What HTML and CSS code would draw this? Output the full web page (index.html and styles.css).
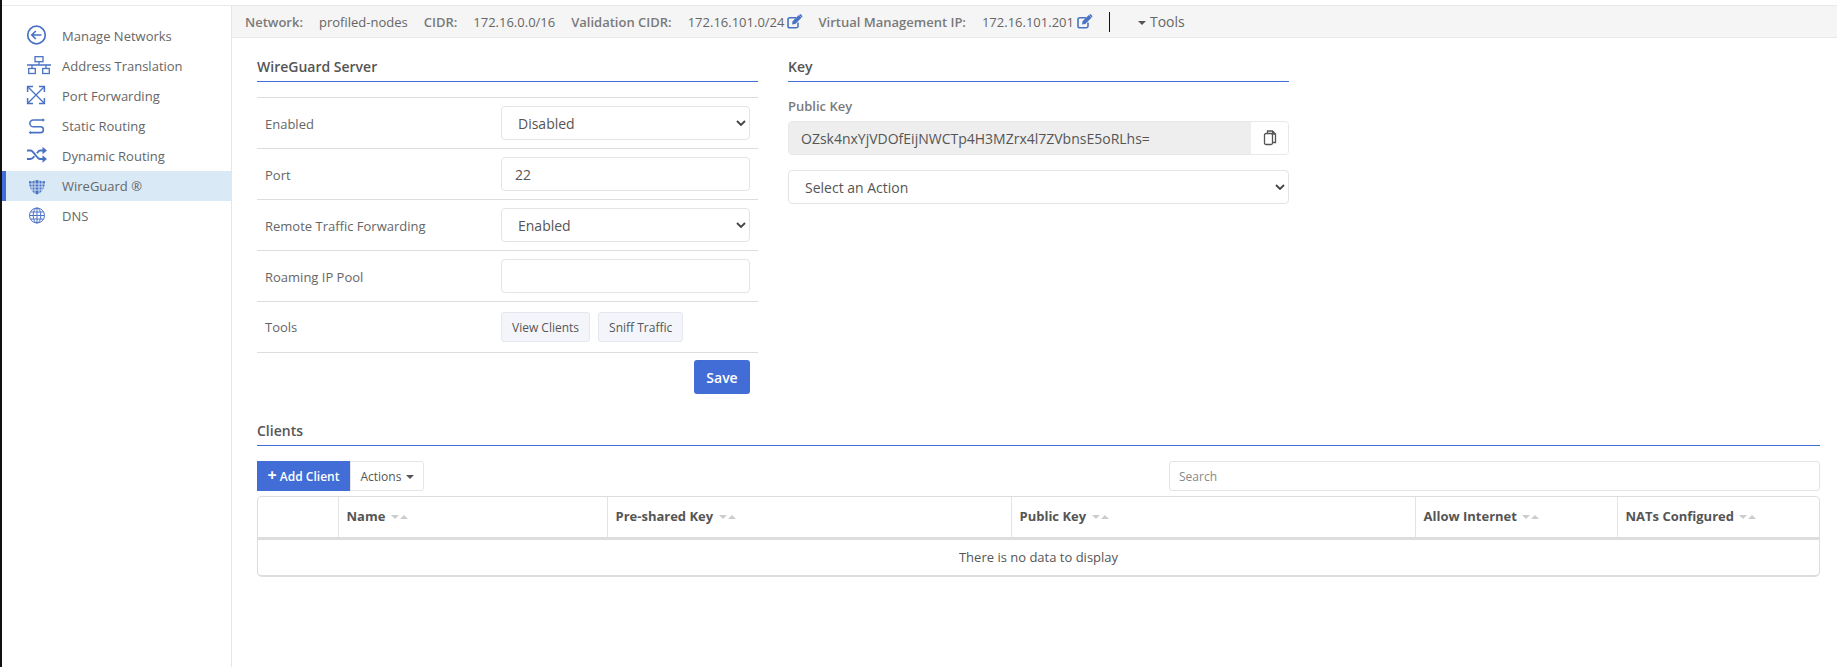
FILE: index.html
```html
<!DOCTYPE html>
<html lang="en">
<head>
  <meta charset="UTF-8" />
  <meta name="viewport" content="width=device-width, initial-scale=1.0" />
  <title>WireGuard</title>
  <link rel="stylesheet" href="styles.css">
</head>
<body>
  <div class="shell">
    <nav class="side">
      <a class="nav-item">
        <svg class="nav-icon" viewBox="0 0 24 20"><circle cx="11.500" cy="9" r="8.800" stroke-width="1.700" /><path d="M16.500 9H7M10.800 5 6.800 9l4 4" stroke-width="1.700" /></svg>
        Manage Networks
      </a>
      <a class="nav-item">
        <svg class="nav-icon" viewBox="0 0 24 20"><rect x="10" y=".7" width="8" height="5" /><rect x="3.700" y="12.500" width="6.600" height="5" /><rect x="17.700" y="12.500" width="6.600" height="5" /><path d="M14 5.700v3.300M2 9h24M7 9v3.500M21 9v3.500" /></svg>
        Address Translation
      </a>
      <a class="nav-item">
        <svg class="nav-icon" viewBox="0 0 24 20"><path d="M3 1l16 16M19 1 3 17" /><path d="M2.600 6V.6h5.400M14 .6h5.400V6M19.400 12v5.400H14M8 17.400H2.600V12" stroke-width="1.500" /></svg>
        Port Forwarding
      </a>
      <a class="nav-item">
        <svg class="nav-icon" viewBox="0 0 24 20"><path d="M18 4H8.300a3.400 3.400 0 0 0 0 6.800h7.200a2.900 2.900 0 0 1 0 5.800H5.500" stroke-width="1.600" /><path class="solid" d="M17.500 2.300 20 4l-2.500 1.700zM6 14.900 3.500 16.600 6 18.300z" /></svg>
        Static Routing
      </a>
      <a class="nav-item">
        <svg class="nav-icon" viewBox="0 0 24 20"><path d="M2 4.500h3.500c3.500 0 6 8.500 9.500 8.500h3M2 13h3.500c1.500 0 2.800-1.200 3.800-2.700M12 7.200c1-1.500 1.800-2.700 3-2.700h3" stroke-width="2" /><path class="solid" d="M17.500.7 22 4.500l-4.500 3.800zM17.500 9.200 22 13l-4.500 3.800z" /></svg>
        Dynamic Routing
      </a>
      <a class="nav-item active">
        <svg class="nav-icon" viewBox="0 0 24 20"><path class="solid" d="M4 5c3 .5 5.500 0 8-1 2.500 1 5 1.500 8 1 0 6-2 11-8 13.500C6 16 4 11 4 5z" /><path class="mesh" d="M3 8h18M3 11h18M3 14h18M7 3v16M10 3v16M14 3v16M17 3v16" /></svg>
        WireGuard ®
      </a>
      <a class="nav-item">
        <svg class="nav-icon thin" viewBox="0 0 24 20"><circle cx="12" cy="9.500" r="7.500" /><ellipse cx="12" cy="9.500" rx="3.800" ry="7.500" /><path d="M12 2v15M4.500 9.500h15M5.500 6h13M5.500 13h13" /></svg>
        DNS
      </a>
    </nav>

    <div class="content">
      <header class="topbar">
        <span class="tb-label">Network:</span><span class="tb-value">profiled-nodes</span>
        <span class="tb-label">CIDR:</span><span class="tb-value">172.16.0.0/16</span>
        <span class="tb-label">Validation CIDR:</span><span class="tb-value">172.16.101.0/24</span>
        <svg class="edit-icon" viewBox="0 0 16 15"><path class="edit-box" d="M11 8.500V12a1.800 1.800 0 0 1-1.800 1.800H2.800A1.800 1.800 0 0 1 1 12V5.500a1.800 1.800 0 0 1 1.800-1.800H9" /><path class="solid" d="M5.500 7.200 11.800 1l2.700 2.700-6.200 6.300-3.200.4zM12.700.4l.8-.3 1.900 1.900-.2.900-.5.500-2.600-2.600z" /></svg>
        <span class="tb-label vm">Virtual Management IP:</span><span class="tb-value">172.16.101.201</span>
        <svg class="edit-icon" viewBox="0 0 16 15"><path class="edit-box" d="M11 8.500V12a1.800 1.800 0 0 1-1.800 1.800H2.800A1.800 1.800 0 0 1 1 12V5.500a1.800 1.800 0 0 1 1.800-1.800H9" /><path class="solid" d="M5.500 7.200 11.800 1l2.700 2.700-6.200 6.300-3.200.4zM12.700.4l.8-.3 1.900 1.900-.2.900-.5.500-2.600-2.600z" /></svg>
        <span class="tb-sep"></span>
        <span class="tb-tools"><i class="caret"></i>Tools</span>
      </header>

      <main class="main">
        <div class="columns">
          <section class="server">
            <h2 class="section-title">WireGuard Server</h2>
            <div class="form-rows">
              <div class="form-row">
                <label>Enabled</label>
                <select class="field"><option>Disabled</option><option>Enabled</option></select>
              </div>
              <div class="form-row">
                <label>Port</label>
                <input class="field" type="text" value="22" />
              </div>
              <div class="form-row">
                <label>Remote Traffic Forwarding</label>
                <select class="field"><option>Enabled</option><option>Disabled</option></select>
              </div>
              <div class="form-row">
                <label>Roaming IP Pool</label>
                <input class="field" type="text" />
              </div>
              <div class="form-row">
                <label class="tools-label">Tools</label>
                <div class="tool-btns">
                  <button class="btn-light">View Clients</button>
                  <button class="btn-light">Sniff Traffic</button>
                </div>
              </div>
            </div>
            <div class="save-row"><button class="btn-save">Save</button></div>
          </section>

          <section class="key">
            <h2 class="section-title">Key</h2>
            <div class="key-label">Public Key</div>
            <div class="key-group">
              <input class="key-input" type="text" readonly value="OZsk4nxYjVDOfEijNWCTp4H3MZrx4l7ZVbnsE5oRLhs=" />
              <button class="key-copy">
                <svg viewBox="0 0 14 16" width="14" height="16"><path d="M4.500 3V1h5l3 3v8.500H9.500M9.500 1v3h3" /><rect x="1.500" y="3.500" width="8" height="11" rx="1.500" /></svg>
              </button>
            </div>
            <select class="field action"><option>Select an Action</option></select>
          </section>
        </div>

        <section class="clients">
          <h2 class="section-title">Clients</h2>
          <div class="toolbar">
            <button class="btn-add"><span class="plus">+</span> Add Client</button>
            <button class="btn-actions">Actions <i class="caret"></i></button>
            <input class="search" type="text" placeholder="Search" />
          </div>
          <div class="table-wrap">
            <table class="clients-table">
              <colgroup>
                <col class="c-check" /><col class="c-name" /><col class="c-key" /><col class="c-key" /><col class="c-flag" /><col />
              </colgroup>
              <thead>
                <tr>
                  <th></th>
                  <th>Name <i class="sort"></i></th>
                  <th>Pre-shared Key <i class="sort"></i></th>
                  <th>Public Key <i class="sort"></i></th>
                  <th>Allow Internet <i class="sort"></i></th>
                  <th>NATs Configured <i class="sort"></i></th>
                </tr>
              </thead>
              <tbody>
                <tr><td colspan="6">There is no data to display</td></tr>
              </tbody>
            </table>
          </div>
        </section>
      </main>
    </div>
  </div>
</body>
</html>
```

FILE: styles.css
```css
* {
  box-sizing: border-box;
}
html, body {
  height: 100%;
  margin: 0;
  overflow: hidden;
}
body {
  background: #fff;
  border-left: 2px solid #111;
  color: #555;
  font-family: 'Open Sans', sans-serif;
  font-size: 13px;
  padding-top: 5px;
}
.shell {
  display: flex;
  height: 100%;
  border-top: 1px solid #e9e9e9;
}

/* sidebar */
.side {
  width: 230px;
  flex: none;
  border-right: 1px solid #e6e6e6;
  padding-top: 15px;
}
.nav-item {
  display: flex;
  align-items: center;
  height: 30px;
  padding-left: 19px;
  color: #666;
  border-left: 4px solid transparent;
}
.nav-item.active {
  background: #d9e9f5;
  border-left-color: #426dd6;
}
.nav-icon {
  width: 24px;
  height: 20px;
  margin-right: 13px;
  flex: none;
  fill: none;
  overflow: visible;
  stroke: #4a72c4;
  stroke-width: 1.300;
}
.nav-icon.thin {
  stroke-width: 1;
}
.nav-icon .mesh {
  stroke: #d9e9f5;
  stroke-width: .9;
}
.nav-icon .solid,
.edit-icon .solid {
  fill: #4a72c4;
  stroke: none;
}

/* top bar */
.content {
  flex: 1;
  min-width: 0;
}
.topbar {
  display: flex;
  align-items: center;
  height: 32px;
  padding-left: 13px;
  background: #f5f5f5;
  border-bottom: 1px solid #e9e9e9;
  color: #666;
}
.tb-label {
  font-weight: 600;
  color: #7a7a7a;
  margin-right: 16px;
}
.tb-label.vm {
  margin-left: 15px;
}
.tb-value {
  margin-right: 16px;
}
.tb-value:has(+ .edit-icon) {
  margin-right: 3px;
}
.edit-icon {
  width: 16px;
  height: 15px;
  flex: none;
}
.edit-box {
  fill: none;
  stroke: #4a72c4;
  stroke-width: 1.600;
}
.tb-sep {
  width: 1px;
  height: 20px;
  background: #111;
  margin-left: 16px;
}
.tb-tools {
  margin-left: 28px;
  font-size: 14px;
}
.caret {
  display: inline-block;
  border-top: 4px solid #555;
  border-left: 4px solid transparent;
  border-right: 4px solid transparent;
  vertical-align: middle;
  margin-right: 4px;
}

/* main area */
.main {
  padding: 14px 17px 0 25px;
}
.columns {
  display: flex;
  gap: 30px;
}
.server, .key {
  width: 501px;
}
.section-title {
  margin: 0;
  height: 30px;
  padding-top: 5px;
  font-size: 14px;
  font-weight: 600;
  line-height: 19px;
  border-bottom: 1px solid #426dd6;
  color: #555;
}
.form-rows {
  margin-top: 15px;
  border-top: 1px solid #ddd;
}
.form-row {
  display: flex;
  align-items: center;
  justify-content: space-between;
  height: 51px;
  padding: 0 8px;
  border-bottom: 1px solid #ddd;
  color: #666;
}
.form-row label {
  flex: none;
  padding-top: 1px;
}
.form-row .tools-label {
  padding-top: 0;
}
.field {
  width: 249px;
  height: 34px;
  padding: 0 16px;
  background-color: #fff;
  border: 1px solid #e4e4e4;
  border-radius: 4px;
  color: #555;
  font-family: inherit;
  font-size: 14px;
  outline: none;
}
select.field {
  appearance: none;
  background-image: url("data:image/svg+xml,%3Csvg xmlns='http://www.w3.org/2000/svg' width='10' height='6'%3E%3Cpath d='M1 1l4 4 4-4' fill='none' stroke='%23444' stroke-width='1.800'/%3E%3C/svg%3E");
  background-repeat: no-repeat;
  background-position: right 3px center;
}
input.field {
  padding: 0 13px;
}
.tool-btns {
  display: flex;
  gap: 8px;
  width: 249px;
}
.btn-light {
  height: 30px;
  padding: 0 10px;
  background: #f4f5fa;
  border: 1px solid #e6e6ee;
  border-radius: 3px;
  color: #555;
  font-family: inherit;
  font-size: 12px;
}
.save-row {
  display: flex;
  justify-content: flex-end;
  padding: 7px 8px 0 0;
}
.btn-save {
  width: 56px;
  height: 34px;
  background: #426dd6;
  border: none;
  border-radius: 3px;
  color: #fff;
  font-family: inherit;
  font-size: 14px;
  font-weight: 600;
}

/* key panel */
.key-label {
  margin-top: 15px;
  height: 24px;
  font-weight: 600;
  color: #7a7a7a;
}
.key-group {
  display: flex;
  height: 34px;
  border: 1px solid #e8e8e8;
  border-radius: 4px;
  overflow: hidden;
}
.key-input {
  flex: 1;
  min-width: 0;
  padding: 0 12px;
  border: none;
  background: #eee;
  color: #555;
  font-family: inherit;
  font-size: 14px;
  outline: none;
}
.key-copy {
  width: 37px;
  padding: 0;
  border: none;
  background: #fff;
  display: flex;
  align-items: center;
  justify-content: center;
}
.key-copy svg {
  fill: none;
  stroke: #555;
  stroke-width: 1.300;
}
.field.action {
  display: block;
  width: 100%;
  margin-top: 15px;
}

/* clients */
.clients {
  margin-top: 22px;
}
.toolbar {
  display: flex;
  align-items: stretch;
  height: 30px;
  margin-top: 15px;
}
.btn-add {
  width: 93px;
  padding: 0;
  background: #426dd6;
  border: none;
  color: #fff;
  font-family: inherit;
  font-size: 12px;
  font-weight: 600;
}
.plus {
  font-size: 16px;
  font-weight: 700;
  line-height: 12px;
}
.btn-actions {
  width: 74px;
  padding: 0;
  background: #fff;
  border: 1px solid #e6e6e6;
  border-radius: 0 3px 3px 0;
  color: #555;
  font-family: inherit;
  font-size: 12px;
}
.btn-actions .caret {
  margin: 0 0 0 1px;
}
.search {
  width: 651px;
  margin-left: auto;
  padding: 0 9px;
  background: #fff;
  border: 1px solid #e4e4e4;
  border-radius: 3px;
  font-family: inherit;
  font-size: 12px;
  outline: none;
}
.search::placeholder {
  color: #888;
}
.table-wrap {
  margin-top: 5px;
  border: 1px solid #ddd;
  border-bottom-width: 2px;
  border-radius: 5px;
  overflow: hidden;
}
.clients-table {
  width: 100%;
  border-collapse: collapse;
  table-layout: fixed;
}
.c-check { width: 80px; }
.c-name { width: 269px; }
.c-key { width: 404px; }
.c-flag { width: 202px; }
.clients-table th {
  height: 41px;
  padding: 0 8px 1px;
  border-right: 1px solid #e4e4e4;
  border-bottom: 3px solid #ddd;
  color: #555;
  font-size: 13px;
  font-weight: 700;
  text-align: left;
}
.clients-table th:last-child {
  border-right: none;
}
.clients-table td {
  height: 37px;
  padding: 0;
  color: #555;
  text-align: center;
}
.sort {
  display: inline-flex;
  gap: 1px;
  margin-left: 2px;
  vertical-align: 2px;
}
.sort::before,
.sort::after {
  content: "";
  border-left: 4px solid transparent;
  border-right: 4px solid transparent;
}
.sort::before {
  border-top: 4px solid #ccc;
}
.sort::after {
  border-bottom: 4px solid #ccc;
}
```
